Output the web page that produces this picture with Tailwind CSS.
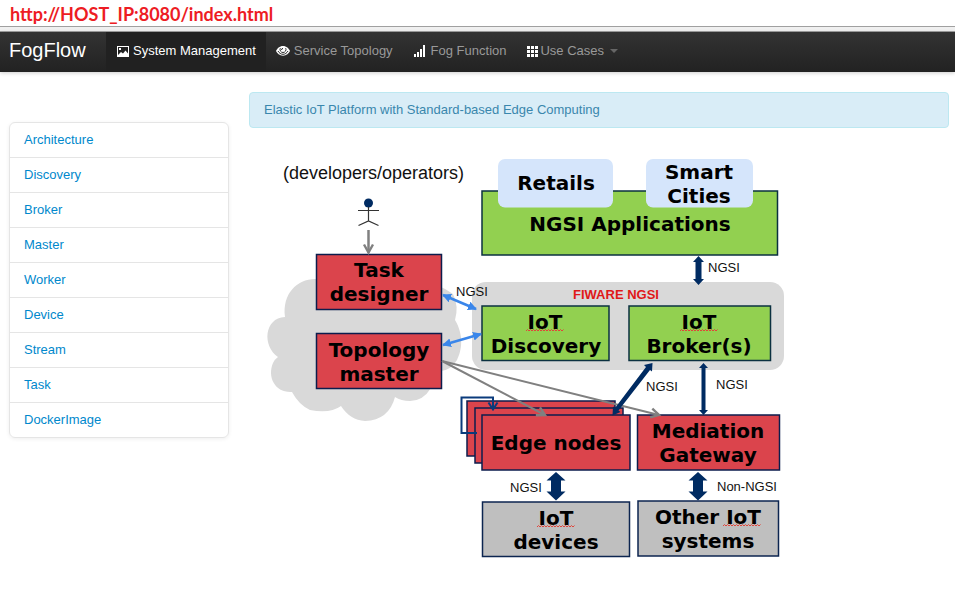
<!DOCTYPE html>
<html lang="en">
<head>
<meta charset="utf-8">
<meta name="viewport" content="width=device-width, initial-scale=1">
<title>FogFlow</title>
<script src="https://cdn.jsdelivr.net/npm/@tailwindcss/browser@4"></script>
</head>
<body class="bg-white font-['Liberation_Sans',Arial,sans-serif] text-[13px] leading-5 text-[#333]">
<p class="h-[26px] pl-[10px] pt-[2px] font-['Lato',sans-serif] text-[18px] leading-6 font-bold text-[#ed1c24]">http://HOST_IP:8080/index.html</p>
<div class="h-[6px] border-y border-[#a0a0a0] bg-[#f0f0f0]"></div>
<header class="bg-linear-to-b from-[#333] to-[#222] shadow-[0_1px_4px_rgba(0,0,0,0.2)]">
  <nav class="flex h-10 items-stretch" aria-label="Main">
    <a href="#" class="flex w-[106px] items-center pl-[9px] pb-1 text-[20px] text-white">FogFlow</a>
    <a href="#" class="flex items-center gap-1 bg-[#212121] px-[10px] pb-[2px] text-white" aria-current="page">
      <svg class="h-[11px] w-[13px]" viewBox="0 0 13 11" aria-hidden="true"><path fill="#fff" fill-rule="evenodd" d="M1 0h12v11H1zM2 1v8l3-3 2 1.500L9.500 4.500l2.500 3V1zM3 2h2v2h-2z"/></svg>
      System Management</a>
    <a href="#" class="flex items-center gap-1 px-[10px] pb-[2px] text-[#999]">
      <svg class="h-[10px] w-[14px]" viewBox="0 0 14 10" aria-hidden="true"><path fill="#fff" d="M7 0C3.500 0 1.200 2.500 0 5c1.200 2.500 3.500 4.700 7 4.700S12.800 7.500 14 5C12.800 2.500 10.500 0 7 0z"/><path d="M2 5c1.200 2 2.800 3.300 5 3.300S10.800 7 12 5" fill="none" stroke="#2b2b2b" stroke-width="1"/><path d="M4.300 2.200a3 3 0 1 0 5.400 0" fill="none" stroke="#2b2b2b" stroke-width="1"/><path d="M5.500 4a1.600 1.600 0 0 1 1.500-1.600" fill="none" stroke="#2b2b2b" stroke-width="1"/></svg>
      Service Topology</a>
    <a href="#" class="flex items-center gap-1 px-[10px] pb-[2px] text-[#999]">
      <svg class="h-3 w-[14px]" viewBox="0 0 14 12" fill="#fff" aria-hidden="true"><path d="M1 9h2v3H1zM4 7h2v5H4zM7 4h2v8H7zM10 0h2v12h-2z"/></svg>
      Fog Function</a>
    <a href="#" class="flex items-center gap-[2px] px-[10px] pb-[2px] text-[#999]" aria-haspopup="true">
      <svg class="h-[11px] w-3" viewBox="0 0 12 11" fill="#fff" aria-hidden="true"><path d="M1 0h3v3H1zM5 0h3v3H5zM9 0h3v3H9zM1 4h3v3H1zM5 4h3v3H5zM9 4h3v3H9zM1 8h3v3H1zM5 8h3v3H5zM9 8h3v3H9z"/></svg>
      Use Cases
      <svg class="ml-1 h-1 w-2" viewBox="0 0 8 4" aria-hidden="true"><path fill="#666" d="M0 0h8L4 4z"/></svg></a>
  </nav>
</header>
<div class="flex items-start gap-5 px-[9px] pt-5 pr-[6px]">
  <aside class="mt-[30px] w-[220px] shrink-0">
    <ul class="divide-y divide-[#e5e5e5] overflow-hidden rounded-md border border-[#e5e5e5] text-[#0088cc] shadow-[0_1px_4px_rgba(0,0,0,0.065)]">
      <li><a href="#" class="block px-[14px] py-[7px]">Architecture</a></li>
      <li><a href="#" class="block px-[14px] py-[7px]">Discovery</a></li>
      <li><a href="#" class="block px-[14px] py-[7px]">Broker</a></li>
      <li><a href="#" class="block px-[14px] py-[7px]">Master</a></li>
      <li><a href="#" class="block px-[14px] py-[7px]">Worker</a></li>
      <li><a href="#" class="block px-[14px] py-[7px]">Device</a></li>
      <li><a href="#" class="block px-[14px] py-[7px]">Stream</a></li>
      <li><a href="#" class="block px-[14px] py-[7px]">Task</a></li>
      <li><a href="#" class="block px-[14px] py-[7px]">DockerImage</a></li>
    </ul>
  </aside>
  <main class="min-w-0 flex-1">
    <p class="rounded border border-[#bce8f1] bg-[#d9edf7] px-[14px] py-[7px] text-[#3a87ad]">Elastic IoT Platform with Standard-based Edge Computing</p>
    <svg class="mt-5 w-[560px] max-w-full" viewBox="249 148 560 420" role="img" aria-label="FogFlow system architecture">
      <defs>
        <marker id="grey" markerUnits="userSpaceOnUse" markerWidth="14" markerHeight="14" refX="10" refY="6" orient="auto"><path d="M2 1.500L10 6L2 10.500" fill="none" stroke="#808080" stroke-width="2.400"/></marker>
        <marker id="blue" markerUnits="userSpaceOnUse" markerWidth="10" markerHeight="10" refX="8" refY="4.500" orient="auto-start-reverse"><path d="M0 0L9 4.500L0 9z" fill="#3a86ea"/></marker>
      </defs>
      <path fill="#d9d9d9" d="M285 317C282 294 297 279 315 279Q325 279 334 285Q352 270 378 281Q398 265 419 281Q440 284 453 294Q459 306 455 320C464 335 462 350 457 360Q451 370 441 371L431 388Q423 401 410 401Q401 401 395 397Q389 420 365 421Q350 420 341 406Q330 414 310 410Q299 405 292 392C275 393 267 377 273 363Q275 359 278 357C262 346 264 318 285 317z"/>
      <rect x="472" y="282" width="312" height="88" rx="14" fill="#d9d9d9"/>
      <g fill="#db444c" stroke="#0c1d4d" stroke-width="1.500">
        <rect x="316.500" y="254.500" width="125" height="55"/>
        <rect x="316.500" y="333.500" width="125" height="55"/>
        <rect x="637.500" y="415" width="142" height="55"/>
        <rect x="467" y="401" width="148" height="55"/>
        <rect x="475" y="408" width="148" height="55"/>
        <rect x="482" y="415" width="148" height="55"/>
      </g>
      <path fill="#92d050" stroke="#0b3040" stroke-width="1.500" d="M482 191h295.500v64H482zM482 306h127v54.500H482zM629 306h141.500v54.500H629z"/>
      <path fill="#bfbfbf" stroke="#0c2550" stroke-width="1.500" d="M482.500 502h147v54.500h-147zM638 501h140.500v55H638z"/>
      <rect x="498" y="159" width="115" height="48.500" rx="7" fill="#d5e5fb"/>
      <rect x="646" y="159" width="107" height="48.500" rx="7" fill="#d5e5fb"/>

      <ellipse cx="368.500" cy="203" rx="4.500" ry="4.500" fill="#002b62"/>
      <path d="M368.500 207v14M358 210.500h21M358.500 225.500l10-4.500l10 4.500" fill="none" stroke="#333" stroke-width="1.200"/>
      <path d="M368.500 230v22.500" stroke="#808080" stroke-width="2.500" marker-end="url(#grey)"/>
      <g fill="none" stroke="#808080" stroke-width="2">
        <path d="M442 361L545 415" marker-end="url(#grey)"/>
        <path d="M442 361L659 415" marker-end="url(#grey)"/>
      </g>
      <g stroke="#3a86ea" stroke-width="2.500">
        <path d="M443 295L476 309" marker-start="url(#blue)" marker-end="url(#blue)"/>
        <path d="M443 345L481 334" marker-start="url(#blue)" marker-end="url(#blue)"/>
      </g>
      <path d="M477 433h-15.500v-35.500h31.500v11M488.500 402.500l4.500 7l4.500-7" fill="none" stroke="#0a3b7c" stroke-width="2"/>
      <g fill="#002b62">
        <path d="M698.500 256l5.500 6h-2.500v17h2.500l-5.500 6l-5.500-6h2.500v-17h-2.500z"/>
        <path d="M703.500 363l4.500 5h-2.500v42h2.500l-4.500 5l-4.500-5h2.500v-42h-2.500z"/>
        <path d="M652.500 363L652 371.500L650 370L618.500 410.500L620.500 412L612.500 415.500L613 406.500L615 408L646 367L644 365z"/>
        <path d="M556 472l9.500 8.500H561v11h4.500L556 500.500l-9.500-9h4.500v-11h-4.500z"/>
        <path d="M698 472l9.500 8.500H703v11h4.500L698 500.500l-9.500-9h4.500v-11h-4.500z"/>
      </g>
      <g font-family="Verdana, 'DejaVu Sans', sans-serif" font-weight="700" font-size="20" text-anchor="middle" fill="#000">
        <text x="556" y="190">Retails</text>
        <text x="699" y="179">Smart</text><text x="699" y="203">Cities</text>
        <text x="630" y="231">NGSI Applications</text>
        <text x="379" y="277">Task</text><text x="379" y="301">designer</text>
        <text x="379" y="357">Topology</text><text x="379" y="381">master</text>
        <text x="545" y="329">IoT</text><text x="546" y="353">Discovery</text>
        <text x="699" y="329">IoT</text><text x="699" y="353">Broker(s)</text>
        <text x="556" y="450">Edge nodes</text>
        <text x="708" y="438">Mediation</text><text x="708" y="462">Gateway</text>
        <text x="556" y="525">IoT</text><text x="556" y="549">devices</text>
        <text x="708" y="524">Other IoT</text><text x="708" y="548">systems</text>
      </g>
      <g fill="none" stroke="#e0453a" stroke-width="1">
        <path id="wave" d="M526 331l1.500-1.500l1.500 1.500l1.500-1.500l1.500 1.500l1.500-1.500l1.500 1.500l1.500-1.500l1.500 1.500l1.500-1.500l1.500 1.500l1.500-1.500l1.500 1.500l1.500-1.500l1.500 1.500l1.500-1.500l1.500 1.500l1.500-1.500l1.500 1.500l1.500-1.500l1.500 1.500l1.500-1.500l1.500 1.500l1.500-1.500l1.500 1.500l1.500-1.500"/>
        <use href="#wave" x="154"/><use href="#wave" x="11" y="196"/><use href="#wave" x="197" y="195"/>
      </g>
      <g font-family="'Liberation Sans', Arial, sans-serif" font-size="13" fill="#111">
        <text x="283" y="179" font-size="18">(developers/operators)</text>
        <text x="456" y="296">NGSI</text>
        <text x="708" y="272">NGSI</text>
        <text x="646" y="391">NGSI</text>
        <text x="716" y="389">NGSI</text>
        <text x="510" y="492">NGSI</text>
        <text x="717" y="491">Non-NGSI</text>
        <text x="573" y="299" font-weight="700" fill="#e01818">FIWARE NGSI</text>
      </g>
    </svg>
  </main>
</div>
</body>
</html>
